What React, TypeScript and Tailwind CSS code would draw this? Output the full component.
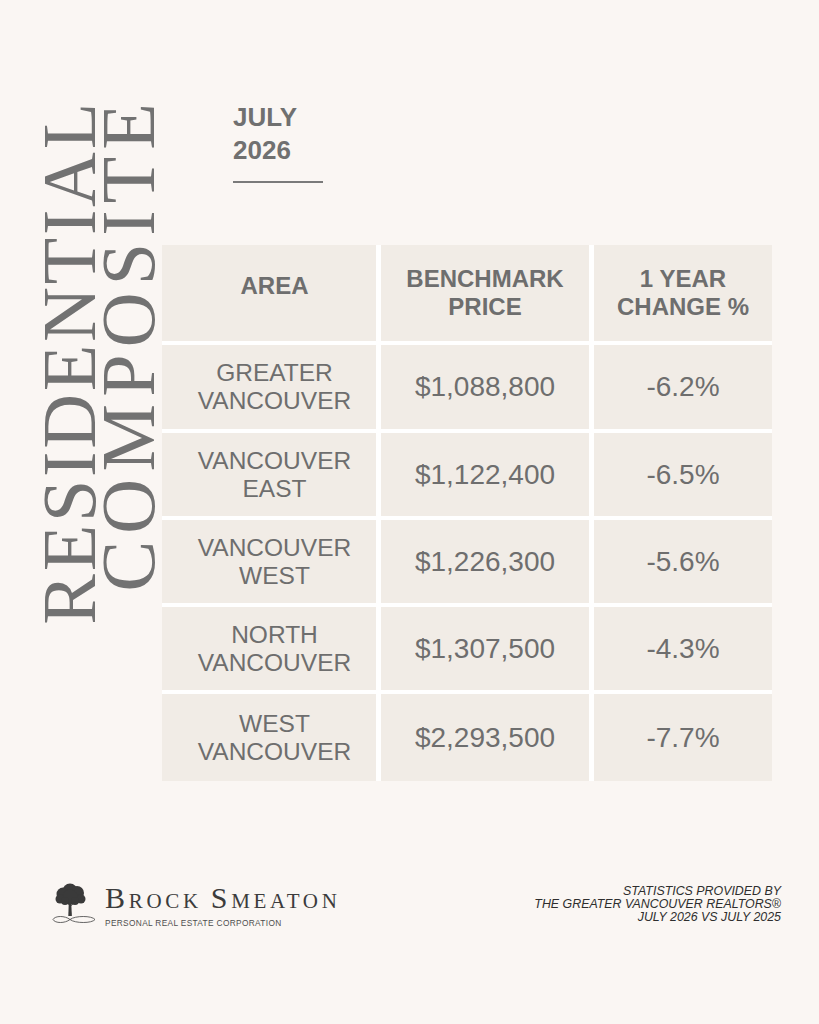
import React from "react";

const rows = [
  { area: ["GREATER", "VANCOUVER"], price: "$1,088,800", change: "-6.2%" },
  { area: ["VANCOUVER", "EAST"], price: "$1,122,400", change: "-6.5%" },
  { area: ["VANCOUVER", "WEST"], price: "$1,226,300", change: "-5.6%" },
  { area: ["NORTH", "VANCOUVER"], price: "$1,307,500", change: "-4.3%" },
  { area: ["WEST", "VANCOUVER"], price: "$2,293,500", change: "-7.7%" },
];

function Tree() {
  return (
    <svg width="44" height="42" viewBox="0 0 44 42" className="block shrink-0">
      <g fill="#3a3a3a">
        <circle cx="18" cy="8" r="7.5" />
        <circle cx="11" cy="11" r="6.5" />
        <circle cx="25" cy="10" r="7" />
        <circle cx="18" cy="14" r="7.5" />
        <circle cx="8" cy="16" r="4.5" />
        <circle cx="29" cy="16" r="4.5" />
        <circle cx="13" cy="18" r="4" />
        <circle cx="23" cy="18" r="4" />
        <path d="M16.8 19 L16.3 33 L19.9 33 L19.2 19 Z" />
        <path d="M17 22 L12 18 L12.6 17.4 L17.6 21 Z" />
        <path d="M18.8 22 L24 18 L24.6 18.6 L19 23 Z" />
      </g>
      <path
        d="M18 36.5 C13 32.5, 3 32.5, 1 36.5 C3 40.5, 13 40.5, 18 36.5 C23 32.5, 40 32.5, 43 36.5 C40 40.5, 23 40.5, 18 36.5 Z"
        fill="none"
        stroke="#555"
        strokeWidth="0.9"
      />
    </svg>
  );
}

export default function App() {
  return (
    <div className="w-[819px] h-[1024px] bg-[#faf6f3] flex flex-col overflow-hidden font-['Liberation_Sans',Arial,sans-serif]">
      <div className="flex items-start pl-[40px] pt-[97px]">
        <div className="flex items-start text-[#727272] text-[76px] leading-[59px] font-['Liberation_Serif',serif] font-normal">
          <span className="block w-[59px] mt-[3px] [writing-mode:vertical-rl] rotate-180 tracking-[2.8px] whitespace-nowrap">
            RESIDENTIAL
          </span>
          <span className="block w-[59px] -mt-[1px] [writing-mode:vertical-rl] rotate-180 tracking-[7.2px] whitespace-nowrap">
            COMPOSITE
          </span>
        </div>
        <div className="flex flex-col pt-[3.5px]">
          <div className="ml-[75px] text-[26px] leading-[33px] font-bold text-[#707070]">
            <div>JULY</div>
            <div>2026</div>
          </div>
          <div className="ml-[75px] mt-[14.5px] w-[90px] h-[2px] bg-[#7a7a7a]" />
          <div className="ml-[4px] mt-[62px] grid grid-cols-[214px_208px_178px] grid-rows-[96px_84px_83px_83px_83px_87px] gap-x-[5px] gap-y-[4px] bg-white text-[#6e6e6e]">
            <div className="bg-[#f1ece6] flex items-center justify-center text-center font-bold text-[24px] leading-[28px] pb-[14px] pl-[11px]">
              AREA
            </div>
            <div className="bg-[#f1ece6] flex flex-col items-center justify-center text-center font-bold text-[24px] leading-[28px]">
              <span>BENCHMARK</span>
              <span>PRICE</span>
            </div>
            <div className="bg-[#f1ece6] flex flex-col items-center justify-center text-center font-bold text-[24px] leading-[28px]">
              <span>1 YEAR</span>
              <span>CHANGE %</span>
            </div>
            {rows.map((r) => (
              <React.Fragment key={r.price}>
                <div className="bg-[#f1ece6] flex flex-col items-center justify-center text-center text-[24.5px] leading-[28px] pl-[11px]">
                  <span>{r.area[0]}</span>
                  <span>{r.area[1]}</span>
                </div>
                <div className="bg-[#f1ece6] flex items-center justify-center text-[28px] leading-[32px]">
                  {r.price}
                </div>
                <div className="bg-[#f1ece6] flex items-center justify-center text-[28px] leading-[32px]">
                  {r.change}
                </div>
              </React.Fragment>
            ))}
          </div>
        </div>
      </div>

      <div className="mt-[102px] flex justify-between items-start pl-[52px] pr-[38px]">
        <div className="flex items-start">
          <Tree />
          <div className="ml-[9px] flex flex-col">
            <div className="font-['Liberation_Serif',serif] text-[#3c3c3c] h-[30px] leading-[30px] tracking-[3.7px] whitespace-nowrap">
              <span className="text-[30px]">B</span>
              <span className="text-[21px]">ROCK </span>
              <span className="text-[30px]">S</span>
              <span className="text-[21px]">MEATON</span>
            </div>
            <div className="mt-[5px] text-[8.3px] leading-[10px] tracking-[0.35px] text-[#4e4e4e] whitespace-nowrap">
              PERSONAL REAL ESTATE CORPORATION
            </div>
          </div>
        </div>
        <div className="mt-[2px] italic text-right text-[12.4px] leading-[13px] text-[#2e2e2e]">
          <div>STATISTICS PROVIDED BY</div>
          <div>THE GREATER VANCOUVER REALTORS®</div>
          <div>JULY 2026 VS JULY 2025</div>
        </div>
      </div>
    </div>
  );
}
